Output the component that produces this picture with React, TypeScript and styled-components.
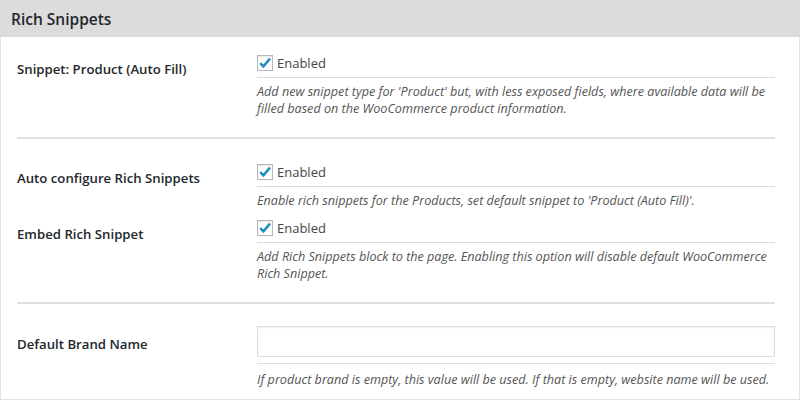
import styled, { createGlobalStyle } from "styled-components";

const GlobalStyle = createGlobalStyle`
  html, body {
    margin: 0;
    padding: 0;
    background: #ffffff;
  }
  body {
    font-family: "Open Sans", "Noto Sans", sans-serif;
    color: #23282d;
  }
`;

type Option = {
  label: string;
  description: string;
};

const groupOne: Option[] = [
  {
    label: "Snippet: Product (Auto Fill)",
    description:
      "Add new snippet type for 'Product' but, with less exposed fields, where available data will be filled based on the WooCommerce product information.",
  },
];

const groupTwo: Option[] = [
  {
    label: "Auto configure Rich Snippets",
    description:
      "Enable rich snippets for the Products, set default snippet to 'Product (Auto Fill)'.",
  },
  {
    label: "Embed Rich Snippet",
    description:
      "Add Rich Snippets block to the page. Enabling this option will disable default WooCommerce Rich Snippet.",
  },
];

function CheckIcon() {
  return (
    <svg width="14" height="14" viewBox="0 0 14 14">
      <path
        d="M2.2 7.2 L5.4 10.4 L12 2.6"
        fill="none"
        stroke="#1e8cbe"
        strokeWidth="2.4"
        strokeLinecap="butt"
        strokeLinejoin="miter"
      />
    </svg>
  );
}

function CheckboxRow({ option, gap }: { option: Option; gap: number }) {
  return (
    <Row $gap={gap}>
      <Label>{option.label}</Label>
      <Field>
        <OptionLine>
          <Checkbox>
            <CheckIcon />
          </Checkbox>
          <OptionText>Enabled</OptionText>
        </OptionLine>
        <Description>{option.description}</Description>
      </Field>
    </Row>
  );
}

function App() {
  return (
    <>
      <GlobalStyle />
      <Panel>
        <Header>Rich Snippets</Header>
        <Body>
          <Group $top={18}>
            {groupOne.map((o) => (
              <CheckboxRow key={o.label} option={o} gap={0} />
            ))}
          </Group>
          <Divider />
          <Group $top={25}>
            {groupTwo.map((o, i) => (
              <CheckboxRow key={o.label} option={o} gap={i === 0 ? 0 : 11} />
            ))}
          </Group>
          <Divider />
          <Group $top={22} $bottom={11}>
            <Row $gap={0}>
              <Label $offset={10}>Default Brand Name</Label>
              <Field>
                <InputLine>
                  <TextInput type="text" />
                </InputLine>
                <Description $top={7}>
                  If product brand is empty, this value will be used. If that is
                  empty, website name will be used.
                </Description>
              </Field>
            </Row>
          </Group>
        </Body>
      </Panel>
    </>
  );
}

const Panel = styled.div`
  width: 800px;
  box-sizing: border-box;
  border: 1px solid #e2e2e2;
  border-top: none;
  background: #ffffff;
  display: flex;
  flex-direction: column;
`;

const Header = styled.h2`
  flex-shrink: 0;
  margin: 0 -1px;
  height: 37px;
  box-sizing: border-box;
  padding: 0 11px;
  display: flex;
  align-items: center;
  background: #dcdcdc;
  font-size: 15.5px;
  font-weight: 600;
  color: #23282d;
`;

const Body = styled.div`
  padding: 0 24px 0 16px;
  display: flex;
  flex-direction: column;
`;

const Group = styled.div<{ $top: number; $bottom?: number }>`
  padding-top: ${(p) => p.$top}px;
  padding-bottom: ${(p) => p.$bottom ?? 20}px;
  display: flex;
  flex-direction: column;
`;

const Row = styled.div<{ $gap: number }>`
  display: grid;
  grid-template-columns: 240px 1fr;
  margin-top: ${(p) => p.$gap}px;
`;

const Label = styled.div<{ $offset?: number }>`
  padding-top: ${(p) => p.$offset ?? 6}px;
  font-size: 13.2px;
  line-height: 17px;
  font-weight: 600;
  color: #23282d;
`;

const Field = styled.div`
  display: flex;
  flex-direction: column;
`;

const OptionLine = styled.div`
  display: flex;
  align-items: center;
  gap: 4px;
  height: 16px;
  padding-bottom: 6px;
  border-bottom: 1px solid #dddddd;
`;

const Checkbox = styled.span`
  width: 16px;
  height: 16px;
  box-sizing: border-box;
  border: 1px solid #b4b9be;
  background: #ffffff;
  box-shadow: inset 0 1px 2px rgba(0, 0, 0, 0.1);
  display: flex;
  align-items: center;
  justify-content: center;
`;

const OptionText = styled.span`
  font-size: 13px;
  color: #444444;
  line-height: 16px;
`;

const InputLine = styled.div`
  padding-bottom: 6px;
  border-bottom: 1px solid #dddddd;
`;

const TextInput = styled.input`
  display: block;
  width: 100%;
  height: 31px;
  box-sizing: border-box;
  border: 1px solid #dddddd;
  box-shadow: inset 0 1px 2px rgba(0, 0, 0, 0.07);
  background: #ffffff;
  margin: 0;
  outline: none;
`;

const Description = styled.p<{ $top?: number }>`
  margin: ${(p) => p.$top ?? 5}px 0 0;
  font-size: 12.6px;
  line-height: 17px;
  font-style: italic;
  color: #555555;
`;

const Divider = styled.hr`
  margin: 0;
  border: none;
  height: 2px;
  background: #e0e0e0;
`;

export default App;
